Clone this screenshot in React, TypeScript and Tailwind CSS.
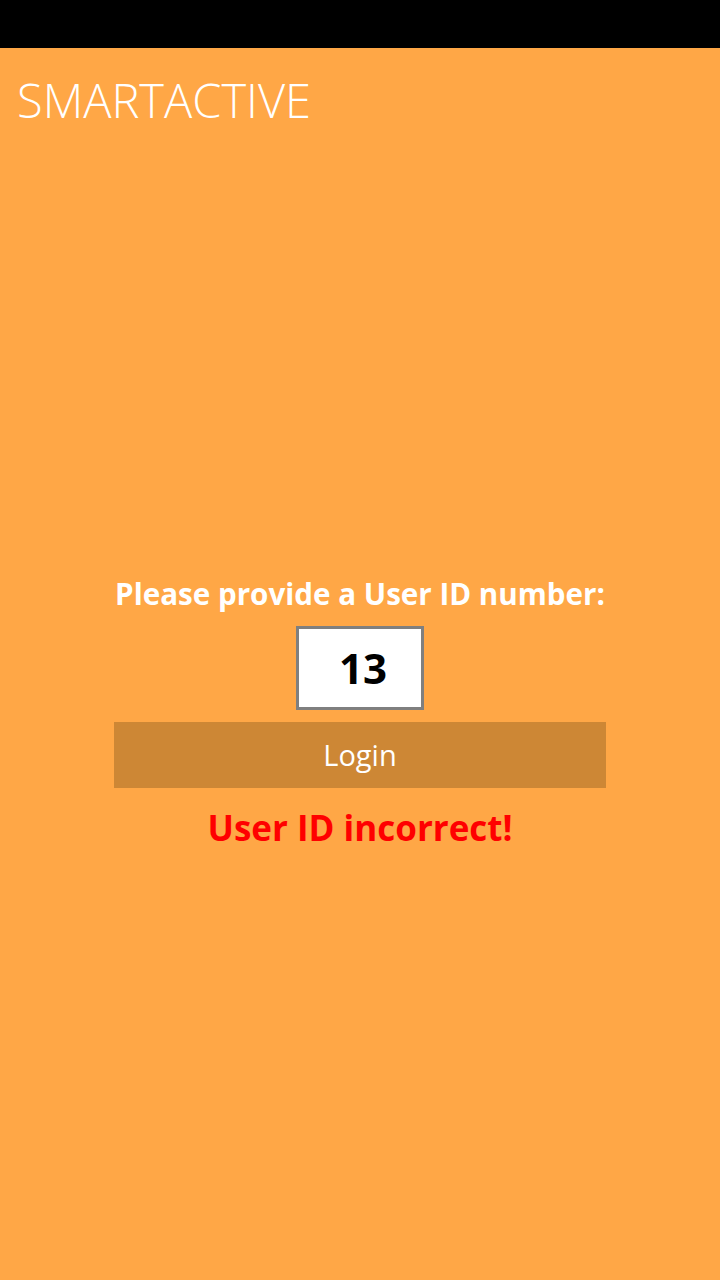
export default function App() {
  return (
    <div
      className="flex h-[1280px] w-[720px] flex-col bg-[#ffa746]"
      style={{ fontFamily: '"Open Sans", "Noto Sans", sans-serif' }}
    >
      <div className="h-[48px] w-full shrink-0 bg-black" />
      <h1 className="ml-[17px] mt-[22px] text-[47px] font-light leading-[60px] text-white">SMARTACTIVE</h1>

      <div className="mt-[444px] flex flex-col items-center">
        <p className="text-[29.6px] font-bold leading-[40px] text-white">Please provide a User ID number:</p>
        <div className="mt-[12px] flex h-[84px] w-[128px] items-center justify-center border-[3px] border-[#7f7f7f] bg-white">
          <span className="pl-[6px] text-[42px] font-bold leading-none text-black">13</span>
        </div>
        <button
          type="button"
          className="mt-[12px] flex h-[66px] w-[492px] items-center justify-center bg-[#cd8735] text-[29px] font-normal text-white"
        >
          Login
        </button>
        <p className="mt-[18px] text-[35px] font-bold leading-[44px] text-[#ff0000]">User ID incorrect!</p>
      </div>
    </div>
  )
}
